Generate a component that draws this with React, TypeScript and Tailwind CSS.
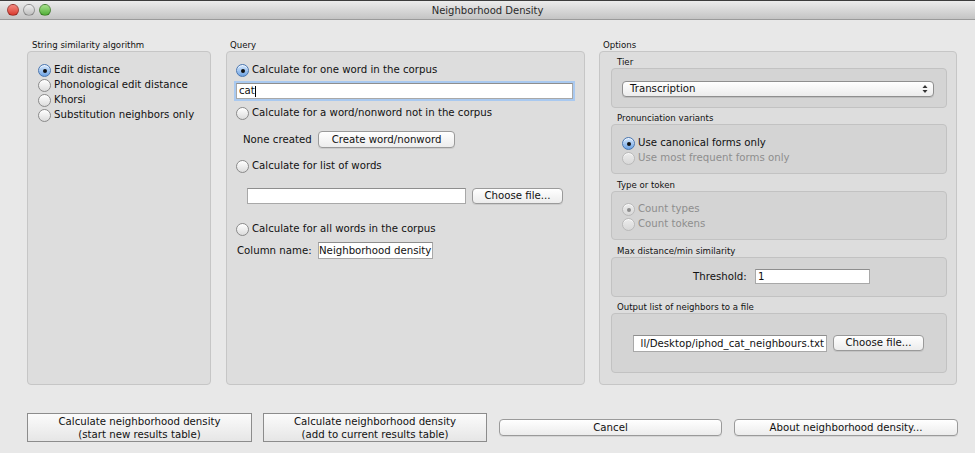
import React from 'react';

const font = "font-['DejaVu_Sans',sans-serif]";

function Radio({ checked = false, disabled = false }: { checked?: boolean; disabled?: boolean }) {
  let cls = 'border-[#8a8a8a] bg-gradient-to-b from-white to-[#dcdcdc]';
  if (checked && !disabled) cls = 'border-[#4a76b0] bg-gradient-to-b from-[#d6e8fc] to-[#6ea3e3]';
  if (disabled) cls = 'border-[#b9b9b9] bg-gradient-to-b from-[#ececec] to-[#d8d8d8]';
  return (
    <span className={`w-[13px] h-[13px] shrink-0 rounded-full border flex items-center justify-center shadow-[inset_0_1px_0_rgba(255,255,255,0.7)] ${cls}`}>
      {checked && <span className={`w-[4px] h-[4px] rounded-full ${disabled ? 'bg-[#8c8c8c]' : 'bg-[#111]'}`}></span>}
    </span>
  );
}

function RadioRow({ label, checked, disabled }: { label: string; checked?: boolean; disabled?: boolean }) {
  return (
    <div className="flex items-center h-[15px] gap-[3px]">
      <Radio checked={checked} disabled={disabled} />
      <span className={`text-[10.2px] leading-none whitespace-nowrap ${disabled ? 'text-[#8e8e8e]' : 'text-[#111]'}`}>{label}</span>
    </div>
  );
}

function Button({ children, className = '' }: { children: React.ReactNode; className?: string }) {
  return (
    <div className={`h-[16px] rounded-[4px] border border-[#9a9a9a] bg-gradient-to-b from-white to-[#ececec] shadow-[0_1px_0_rgba(0,0,0,0.08)] flex items-center justify-center text-[10.2px] text-[#111] whitespace-nowrap ${className}`}>
      {children}
    </div>
  );
}

function TextInput({ children, className = '' }: { children?: React.ReactNode; className?: string }) {
  return (
    <div className={`bg-white border border-[#a8a8a8] border-t-[#8e8e8e] flex items-center overflow-hidden text-[10.2px] text-[#111] whitespace-nowrap ${className}`}>
      {children}
    </div>
  );
}

function SubLabel({ children, className = '' }: { children: React.ReactNode; className?: string }) {
  return <div className={`h-[12px] leading-[12px] pl-[6px] text-[8.6px] text-[#111] ${className}`}>{children}</div>;
}

function Light({ color }: { color: string }) {
  return <span className={`w-[12px] h-[12px] rounded-full border border-black/30 ${color}`}></span>;
}

export default function App() {
  return (
    <div className={`w-[977px] h-[455px] bg-white ${font}`}>
      <div className="w-[975px] h-[453px] bg-[#e8e8e8] flex flex-col">
        {/* title bar */}
        <div className="h-[20px] shrink-0 flex items-center border-t border-t-[#3c3c3c] border-b border-b-[#9a9a9a] bg-gradient-to-b from-[#ececec] to-[#c4c4c4]">
          <div className="w-[80px] flex items-center gap-[4px] pl-[7px]">
            <Light color="bg-gradient-to-b from-[#f3877f] to-[#d9362c]" />
            <Light color="bg-gradient-to-b from-[#f0f0f0] to-[#bdbdbd]" />
            <Light color="bg-gradient-to-b from-[#a6e28a] to-[#4fae35]" />
          </div>
          <div className="flex-1 text-center text-[10px] text-[#2a2a2a]">Neighborhood Density</div>
          <div className="w-[80px]"></div>
        </div>

        {/* panels */}
        <div className="flex pt-[19px] pl-[27px]">
          <div className="w-[184px] flex flex-col">
            <div className="h-[12px] leading-[12px] pl-[5px] text-[8.6px] text-[#111]">String similarity algorithm</div>
            <div className="h-[334px] rounded-[4px] border border-[#c6c6c6] bg-[#dddddd] pt-[11px] pl-[10px]">
              <RadioRow label="Edit distance" checked />
              <RadioRow label="Phonological edit distance" />
              <RadioRow label="Khorsi" />
              <RadioRow label="Substitution neighbors only" />
            </div>
          </div>

          <div className="w-[359px] ml-[15px] flex flex-col">
            <div className="h-[12px] leading-[12px] pl-[4px] text-[8.6px] text-[#111]">Query</div>
            <div className="h-[334px] rounded-[4px] border border-[#c6c6c6] bg-[#dddddd] pt-[11px] pl-[9px] flex flex-col">
              <RadioRow label="Calculate for one word in the corpus" checked />
              <TextInput className="mt-[5px] w-[337px] h-[16px] border-[#6d9bd6] shadow-[0_0_0_2px_#a9c9f0] pl-[2px]">
                cat<span className="w-px h-[11px] bg-black"></span>
              </TextInput>
              <div className="mt-[7px]">
                <RadioRow label="Calculate for a word/nonword not in the corpus" />
              </div>
              <div className="mt-[10px] flex items-center h-[17px]">
                <span className="ml-[7px] w-[75px] text-[10.2px] text-[#111]">None created</span>
                <Button className="w-[137px] h-[17px]">Create word/nonword</Button>
              </div>
              <div className="mt-[11px]">
                <RadioRow label="Calculate for list of words" />
              </div>
              <div className="mt-[14px] flex items-center">
                <TextInput className="ml-[11px] w-[219px] h-[16px]" />
                <Button className="ml-[6px] w-[91px]">Choose file...</Button>
              </div>
              <div className="mt-[18px]">
                <RadioRow label="Calculate for all words in the corpus" />
              </div>
              <div className="mt-[5px] flex items-center h-[17px]">
                <span className="ml-[1px] w-[81px] text-[10.2px] text-[#111]">Column name:</span>
                <TextInput className="w-[115px] h-[17px]">Neighborhood density</TextInput>
              </div>
            </div>
          </div>

          <div className="w-[358px] ml-[14px] flex flex-col">
            <div className="h-[12px] leading-[12px] pl-[4px] text-[8.6px] text-[#111]">Options</div>
            <div className="h-[334px] rounded-[4px] border border-[#c6c6c6] bg-[#dddddd] pt-[4px] pl-[11px] flex flex-col">
              <SubLabel>Tier</SubLabel>
              <div className="w-[336px] h-[40px] rounded-[4px] border border-[#c2c2c2] bg-[#d4d4d4] pt-[12px] pl-[10px]">
                <div className="w-[312px] h-[16px] rounded-[4px] border border-[#8f8f8f] bg-gradient-to-b from-white to-[#ececec] shadow-[0_1px_0_rgba(0,0,0,0.1)] flex items-center justify-between pl-[7px] pr-[5px]">
                  <span className="text-[10.2px] text-[#111]">Transcription</span>
                  <svg width="6" height="10" viewBox="0 0 6 10">
                    <path d="M3 1 L5.5 4 H0.5 Z" fill="#333" />
                    <path d="M3 9 L5.5 6 H0.5 Z" fill="#333" />
                  </svg>
                </div>
              </div>

              <SubLabel className="mt-[4px]">Pronunciation variants</SubLabel>
              <div className="w-[336px] h-[50px] rounded-[4px] border border-[#c2c2c2] bg-[#d4d4d4] pt-[11px] pl-[10px]">
                <RadioRow label="Use canonical forms only" checked />
                <RadioRow label="Use most frequent forms only" disabled />
              </div>

              <SubLabel className="mt-[5px]">Type or token</SubLabel>
              <div className="w-[336px] h-[49px] rounded-[4px] border border-[#c2c2c2] bg-[#d4d4d4] pt-[10px] pl-[10px]">
                <RadioRow label="Count types" checked disabled />
                <RadioRow label="Count tokens" disabled />
              </div>

              <SubLabel className="mt-[5px]">Max distance/min similarity</SubLabel>
              <div className="w-[336px] h-[40px] rounded-[4px] border border-[#c2c2c2] bg-[#d4d4d4] pt-[11px] pl-[81px] flex items-start">
                <span className="w-[62px] h-[15px] flex items-center text-[10.2px] text-[#111]">Threshold:</span>
                <TextInput className="w-[115px] h-[15px] pl-[2px]">1</TextInput>
              </div>

              <SubLabel className="mt-[4px]">Output list of neighbors to a file</SubLabel>
              <div className="w-[336px] h-[60px] rounded-[4px] border border-[#c2c2c2] bg-[#d4d4d4] pt-[21px] pl-[21px] flex items-start">
                <TextInput className="w-[194px] h-[17px] justify-end pr-[2px]">ll/Desktop/iphod_cat_neighbours.txt</TextInput>
                <Button className="ml-[6px] w-[91px] h-[16px]">Choose file...</Button>
              </div>
            </div>
          </div>
        </div>

        {/* bottom buttons */}
        <div className="mt-[28px] pl-[27px] h-[29px] flex items-center">
          <div className="w-[225px] h-[29px] border border-[#8c8c8c] bg-gradient-to-b from-[#fbfbfb] to-[#e6e6e6] flex flex-col items-center justify-center text-[10.2px] leading-[13px] text-[#111]">
            <span>Calculate neighborhood density</span>
            <span>(start new results table)</span>
          </div>
          <div className="ml-[11px] w-[224px] h-[29px] border border-[#8c8c8c] bg-gradient-to-b from-[#fbfbfb] to-[#e6e6e6] flex flex-col items-center justify-center text-[10.2px] leading-[13px] text-[#111]">
            <span>Calculate neighborhood density</span>
            <span>(add to current results table)</span>
          </div>
          <Button className="ml-[12px] w-[223px] h-[17px]">Cancel</Button>
          <Button className="ml-[12px] w-[224px] h-[17px]">About neighborhood density...</Button>
        </div>
      </div>
    </div>
  );
}
